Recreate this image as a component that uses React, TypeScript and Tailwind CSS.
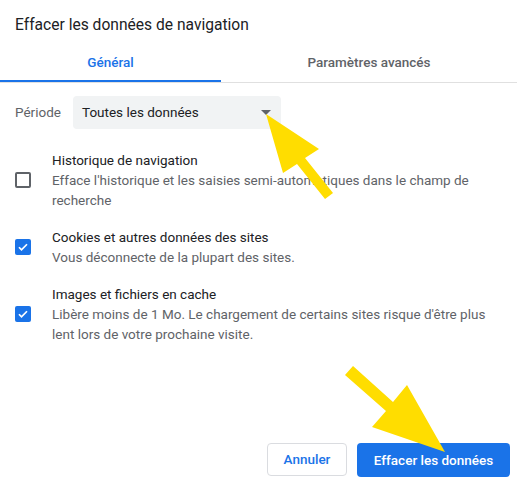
import React from 'react';

type Item = {
  title: string;
  desc: string;
  checked: boolean;
};

const items: Item[] = [
  {
    title: 'Historique de navigation',
    desc: "Efface l'historique et les saisies semi-automatiques dans le champ de recherche",
    checked: false,
  },
  {
    title: 'Cookies et autres données des sites',
    desc: 'Vous déconnecte de la plupart des sites.',
    checked: true,
  },
  {
    title: 'Images et fichiers en cache',
    desc: "Libère moins de 1 Mo. Le chargement de certains sites risque d'être plus lent lors de votre prochaine visite.",
    checked: true,
  },
];

const Checkbox: React.FC<{ checked: boolean }> = ({ checked }) =>
  checked ? (
    <div className="w-4 h-4 rounded-[2px] bg-[#1a73e8] flex items-center justify-center shrink-0">
      <svg className="w-3 h-3" viewBox="0 0 24 24" fill="none" stroke="white" strokeWidth={3.5}>
        <path d="M4 12.5l5 5L20 6.5" />
      </svg>
    </div>
  ) : (
    <div className="w-4 h-4 rounded-[2px] border-2 border-[#5f6368] shrink-0" />
  );

export default function App() {
  return (
    <div className="relative w-[517px] h-[486px] bg-white flex flex-col font-['Roboto',sans-serif] overflow-hidden">
      <div className="h-[44px] pt-[15px] pl-[15px] text-[15.6px] leading-[20px] text-[#202124]">
        Effacer les données de navigation
      </div>

      <div className="flex h-[39px] border-b border-[#e0e0e0]">
        <div className="w-[221px] flex flex-col">
          <div className="flex-1 flex items-center justify-center text-[13.5px] font-medium text-[#1a73e8]">
            Général
          </div>
          <div className="h-[2px] bg-[#1a73e8]" />
        </div>
        <div className="flex-1 flex items-center justify-center pb-[2px] text-[13.5px] font-medium text-[#5f6368]">
          Paramètres avancés
        </div>
      </div>

      <div className="flex items-center pl-[15px] mt-[13px]">
        <span className="w-[58px] text-[13.5px] text-[#5f6368]">Période</span>
        <div className="w-[208px] h-[33px] rounded-[4px] bg-[#f1f3f4] flex items-center justify-between pl-[9px] pr-[10px]">
          <span className="text-[13.5px] text-[#202124]">Toutes les données</span>
          <svg width="10" height="5" viewBox="0 0 10 5">
            <path d="M0 0h10L5 5z" fill="#5f6368" />
          </svg>
        </div>
      </div>

      <div className="flex flex-col gap-[17px] mt-[21px]">
        {items.map((item) => (
          <div key={item.title} className="flex items-center pl-[15px] pr-[20px]">
            <Checkbox checked={item.checked} />
            <div className="ml-[21px] text-[13.5px] leading-[20px]">
              <div className="text-[#202124]">{item.title}</div>
              <div className="text-[#5f6368]">{item.desc}</div>
            </div>
          </div>
        ))}
      </div>

      <div className="mt-auto flex justify-end gap-[10px] pr-[7px] pb-[9px]">
        <button className="w-[80px] h-[33px] rounded-[4px] border border-[#dadce0] bg-white text-[13.5px] font-medium text-[#1a73e8]">
          Annuler
        </button>
        <button className="w-[153px] h-[34px] rounded-[4px] bg-[#1a73e8] text-[13.5px] font-medium text-white">
          Effacer les données
        </button>
      </div>

      {/* annotation arrows drawn over the dialog */}
      <svg className="absolute inset-0 pointer-events-none" width="517" height="486" viewBox="0 0 517 486">
        <polygon
          points="266,114 319,149 305,158 333,193 325,199 297,164 283,173"
          fill="#ffdd00"
        />
        <polygon
          points="445,452 407,385 393,402 353,366 345,375 386,411 372,427"
          fill="#ffdd00"
        />
      </svg>
    </div>
  );
}
